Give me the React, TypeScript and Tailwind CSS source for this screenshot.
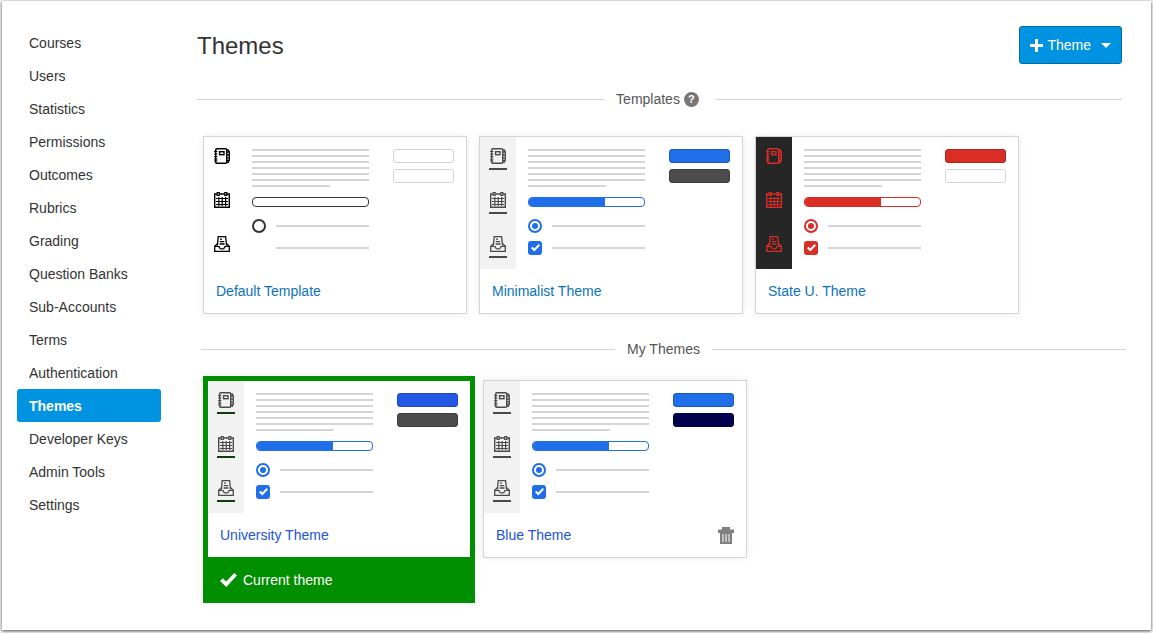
import clsx from 'clsx';
import type { ReactNode } from 'react';

const NAV_ITEMS = [
  'Courses',
  'Users',
  'Statistics',
  'Permissions',
  'Outcomes',
  'Rubrics',
  'Grading',
  'Question Banks',
  'Sub-Accounts',
  'Terms',
  'Authentication',
  'Themes',
  'Developer Keys',
  'Admin Tools',
  'Settings',
];

const ACTIVE_ITEM = 'Themes';

interface Theme {
  name: string;
  // Tailwind classes for each themed part of the preview
  nav: string;
  icon: string;
  underline?: string;
  accent?: string;
  primary: string;
  secondary: string;
  link: string;
}

const EMPTY_BUTTON = 'bg-white border-[#d2d3d5]';

const TEMPLATES: Theme[] = [
  {
    name: 'Default Template',
    nav: 'bg-white',
    icon: 'text-black',
    primary: EMPTY_BUTTON,
    secondary: EMPTY_BUTTON,
    link: 'text-[#0b72be]',
  },
  {
    name: 'Minimalist Theme',
    nav: 'bg-[#f2f2f2]',
    icon: 'text-[#4a4a4a]',
    underline: 'bg-[#4a4a4a]',
    accent: 'text-[#206ee8]',
    primary: 'bg-[#206ee8] border-[#1a59bd]',
    secondary: 'bg-[#4c4c4c] border-[#3d3d3d]',
    link: 'text-[#0b72be]',
  },
  {
    name: 'State U. Theme',
    nav: 'bg-[#262626]',
    icon: 'text-[#d92d26]',
    accent: 'text-[#d92d26]',
    primary: 'bg-[#d92d26] border-[#ae241e]',
    secondary: EMPTY_BUTTON,
    link: 'text-[#0b72be]',
  },
];

const UNIVERSITY_THEME: Theme = {
  name: 'University Theme',
  nav: 'bg-[#f2f2f2]',
  icon: 'text-[#4a4a4a]',
  underline: 'bg-[#0a4205]',
  accent: 'text-[#206ee8]',
  primary: 'bg-[#2656e8] border-[#1e46bd]',
  secondary: 'bg-[#4c4c4c] border-[#3d3d3d]',
  link: 'text-[#2152db]',
};

const BLUE_THEME: Theme = {
  name: 'Blue Theme',
  nav: 'bg-[#f2f2f2]',
  icon: 'text-[#4a4a4a]',
  underline: 'bg-[#4a4a4a]',
  accent: 'text-[#206ee8]',
  primary: 'bg-[#206ee8] border-[#1a59bd]',
  secondary: 'bg-[#00004d] border-[#00003d]',
  link: 'text-[#2152db]',
};

function CoursesIcon() {
  return (
    <svg viewBox="0 0 16 16" className="size-4" fill="none" stroke="currentColor" aria-hidden="true">
      <rect x="1.7" y="0.7" width="11" height="14.6" rx="1" strokeWidth="1.4" />
      <path d="M0 3.5h3.4M0 6h3.4M0 8.5h3.4M0 11h3.4M0 13h3.4" strokeWidth="1.2" />
      <rect x="5.6" y="3.7" width="4.4" height="3" strokeWidth="1.4" />
      <path d="M12.6 1.8h1.7v1.7h1v9.2h-1v1.6h-1.7M12.6 4.2h2.8M12.6 7h2.8M12.6 9.8h2.8M12.6 12.4h2.8" strokeWidth="1.3" />
    </svg>
  );
}

function CalendarIcon() {
  return (
    <svg viewBox="0 0 16 16" className="size-4" fill="none" stroke="currentColor" aria-hidden="true">
      <path d="M3 2H.7v13.3h14.6V2H13M5.2 2h5.6" strokeWidth="1.4" />
      <rect x="3.2" y="0.6" width="2" height="2.8" strokeWidth="1.2" />
      <rect x="10.8" y="0.6" width="2" height="2.8" strokeWidth="1.2" />
      <path d="M4.8 5v9M8.200 5v9M11.600 5v9M2 6.500h12M2 9.500h12M2 12.500h12" strokeWidth="1.2" />
    </svg>
  );
}

function InboxIcon() {
  return (
    <svg viewBox="0 0 16 16" className="size-4" fill="none" stroke="currentColor" strokeWidth="1.3" aria-hidden="true">
      <path d="M3.400 9.400 4.200.7h7.400l1 8.700" />
      <path d="M6 3.200h2M5.800 5.600h4.400M5.600 8h5" />
      <path d="M3.600 7.600 .7 10.300v5h14.600v-5l-2.900-2.700" />
      <path d="M.7 10.300h3.500c1 0 1 .4 1.300 1.200.3.900.6 1.300 1.500 1.300h2c.9 0 1.200-.4 1.500-1.300.3-.8.300-1.200 1.300-1.200h3.500" />
    </svg>
  );
}

function CheckIcon({ className }: { className: string }) {
  return (
    <svg viewBox="0 0 17 14" className={className} fill="currentColor" aria-hidden="true">
      <path d="M0 8 2.8 5.2 6.2 8.5 14.3 0 17 2.6 6.3 14z" />
    </svg>
  );
}

function TrashIcon() {
  return (
    <svg viewBox="0 0 16 17" className="h-[17px] w-4" fill="currentColor" aria-hidden="true">
      <path
        fillRule="evenodd"
        d="M4 0h8v2.500h4V6h-2v11H2V6H0V2.500h4zM4.500 7v8h1V7zM7.500 7v8h1V7zM10.500 7v8h1V7z"
      />
    </svg>
  );
}

function PreviewNavItem({ theme, children }: { theme: Theme; children: ReactNode }) {
  return (
    <div className="flex h-11 flex-col items-center gap-1 pt-[11px]">
      {children}
      {theme.underline && <div className={clsx('h-0.5 w-[18px]', theme.underline)} />}
    </div>
  );
}

function ThemePreview({ theme }: { theme: Theme }) {
  return (
    <div className="flex h-[132px]" aria-hidden="true">
      <div className={clsx('w-9', theme.nav, theme.icon)}>
        <PreviewNavItem theme={theme}>
          <CoursesIcon />
        </PreviewNavItem>
        <PreviewNavItem theme={theme}>
          <CalendarIcon />
        </PreviewNavItem>
        <PreviewNavItem theme={theme}>
          <InboxIcon />
        </PreviewNavItem>
      </div>

      <div className={clsx('ml-3 w-[117px] pt-3', theme.accent ?? 'text-[#333]')}>
        {/* Body copy */}
        <div className="flex flex-col gap-1">
          {[0, 1, 2, 3, 4, 5].map((line) => (
            <div key={line} className="h-0.5 bg-[#d4d4d4]" />
          ))}
          <div className="h-0.5 w-2/3 bg-[#d4d4d4]" />
        </div>

        {/* Progress bar */}
        <div className="mt-2.5 h-2.5 overflow-hidden rounded border border-current">
          {theme.accent && <div className="h-full w-[66%] bg-current" />}
        </div>

        {/* Radio */}
        <div className="mt-3 flex items-center">
          <div className="flex size-3.5 items-center justify-center rounded-full border-2 border-current">
            {theme.accent && <div className="size-1.5 rounded-full bg-current" />}
          </div>
          <div className="ml-2.5 h-0.5 flex-1 bg-[#d4d4d4]" />
        </div>

        {/* Checkbox */}
        <div className="mt-2 flex items-center">
          <div className={clsx('flex size-3.5 items-center justify-center rounded-[3px]', theme.accent && 'bg-current')}>
            {theme.accent && <CheckIcon className="w-[9px] text-white" />}
          </div>
          <div className="ml-2.5 h-0.5 flex-1 bg-[#d4d4d4]" />
        </div>
      </div>

      <div className="ml-auto flex flex-col gap-1.5 pt-3 pr-3">
        <div className={clsx('h-3.5 w-[61px] rounded-[3px] border', theme.primary)} />
        <div className={clsx('h-3.5 w-[61px] rounded-[3px] border', theme.secondary)} />
      </div>
    </div>
  );
}

interface ThemeCardProps {
  theme: Theme;
  isCurrent?: boolean;
  canDelete?: boolean;
}

function ThemeCard({ theme, isCurrent, canDelete }: ThemeCardProps) {
  return (
    <article
      className={clsx(
        'shadow-[0_0_8px_rgba(0,0,0,0.08)]',
        isCurrent ? 'w-[272px] bg-[#008f00] px-[5px] pt-[5px]' : 'w-[264px] border border-[#d4d4d4] bg-white'
      )}
    >
      <div className="bg-white">
        <ThemePreview theme={theme} />
        <div className="flex h-11 items-center justify-between px-3">
          <a href="#" className={theme.link}>
            {theme.name}
          </a>
          {canDelete && (
            <button type="button" className="text-[#808080]" aria-label={`Delete ${theme.name}`}>
              <TrashIcon />
            </button>
          )}
        </div>
      </div>
      {isCurrent && (
        <div className="flex h-[46px] items-center gap-1.5 pl-3 text-white">
          <CheckIcon className="w-[17px]" />
          <span>Current theme</span>
        </div>
      )}
    </article>
  );
}

function SectionHeading({ children }: { children: ReactNode }) {
  return (
    <div className="flex h-5 items-center gap-3 text-[#555]">
      <div className="flex-1 border-t border-[#d4d4d4]" />
      {children}
      <div className="flex-1 border-t border-[#d4d4d4]" />
    </div>
  );
}

export default function App() {
  return (
    <div className="flex min-h-screen bg-[#f4f4f4] px-0.5 pt-px pb-[3px] font-['Liberation_Sans',Arial,sans-serif] text-sm leading-5 text-[#2d3b45]">
      <div className="flex flex-1 bg-white pr-[29px] pl-[15px] pt-[25px] shadow-[0_1px_3px_rgba(0,0,0,0.7)]">
        <nav className="w-36 shrink-0" aria-label="Account">
          <ul>
            {NAV_ITEMS.map((item) => (
              <li key={item}>
                <a
                  href="#"
                  aria-current={item === ACTIVE_ITEM ? 'page' : undefined}
                  className={clsx(
                    'flex h-[33px] items-center rounded-[3px] px-3',
                    item === ACTIVE_ITEM ? 'bg-[#0093e1] font-bold text-white' : 'text-[#333]'
                  )}
                >
                  {item}
                </a>
              </li>
            ))}
          </ul>
        </nav>

        <main className="ml-9 min-w-0 flex-1 pb-[27px]">
          <header className="flex h-[38px] items-center justify-between">
            <h1 className="pt-0.5 text-2xl text-[#333]">Themes</h1>
            <button
              type="button"
              aria-haspopup="menu"
              className="flex h-[38px] items-center rounded-[3px] border border-[#006aa3] bg-[#0093e1] px-2.5 text-white"
            >
              <svg viewBox="0 0 13 13" className="size-[13px]" fill="currentColor" aria-hidden="true">
                <path d="M5 0h3v5h5v3H8v5H5V8H0V5h5z" />
              </svg>
              <span className="ml-1">Theme</span>
              <svg viewBox="0 0 10 5" className="ml-2.5 h-[5px] w-2.5" fill="currentColor" aria-hidden="true">
                <path d="M0 0h10L5 5z" />
              </svg>
            </button>
          </header>

          <section className="mt-[25px]">
            <SectionHeading>
              <div className="flex items-center gap-1 pr-1">
                <h2>Templates</h2>
                <button
                  type="button"
                  aria-label="About templates"
                  className="flex size-[15px] items-center justify-center rounded-full bg-[#777] text-[11px] font-bold text-white"
                >
                  ?
                </button>
              </div>
            </SectionHeading>
            <div className="mt-[27px] flex flex-wrap gap-3 pl-1.5">
              {TEMPLATES.map((theme) => (
                <ThemeCard key={theme.name} theme={theme} />
              ))}
            </div>
          </section>

          <section className="mt-[25px]">
            <div className="-mr-1 ml-1">
              <SectionHeading>
                <h2>My Themes</h2>
              </SectionHeading>
            </div>
            <div className="mt-[17px] flex flex-wrap items-start gap-2 pl-1.5">
              <ThemeCard theme={UNIVERSITY_THEME} isCurrent />
              <div className="pt-1">
                <ThemeCard theme={BLUE_THEME} canDelete />
              </div>
            </div>
          </section>
        </main>
      </div>
    </div>
  );
}
